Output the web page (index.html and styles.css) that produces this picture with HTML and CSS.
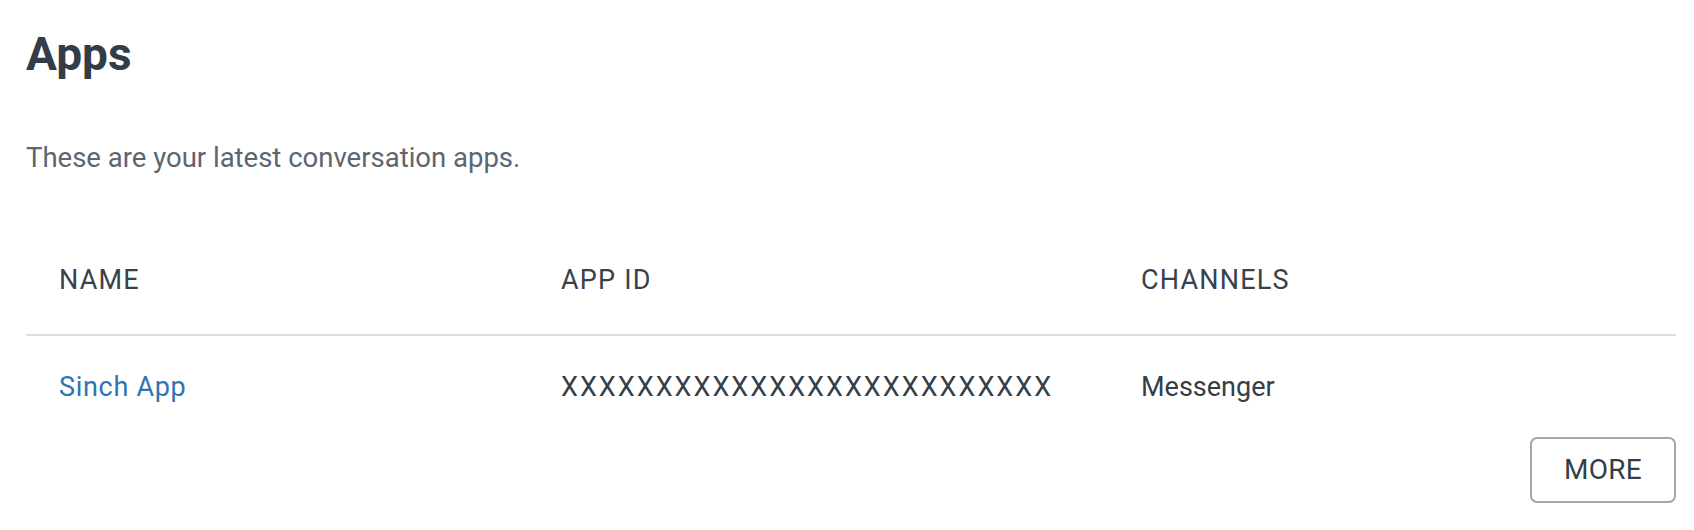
FILE: index.html
```html
<!DOCTYPE html>
<html>
<head>
<meta charset="utf-8">
<link rel="stylesheet" href="styles.css">
</head>
<body>
<main class="page">
  <h1 class="title">Apps</h1>
  <p class="subtitle">These are your latest conversation apps.</p>
  <div class="apps-table">
    <div class="row head">
      <div class="cell">NAME</div>
      <div class="cell">APP ID</div>
      <div class="cell">CHANNELS</div>
    </div>
    <div class="row body">
      <div class="cell"><a class="app-link" href="#">Sinch App</a></div>
      <div class="cell app-id">XXXXXXXXXXXXXXXXXXXXXXXXXX</div>
      <div class="cell">Messenger</div>
    </div>
  </div>
  <div class="actions">
    <button class="more-btn">MORE</button>
  </div>
</main>
</body>
</html>
```

FILE: styles.css
```css
html, body {
  margin: 0;
  padding: 0;
  background: #ffffff;
}

body {
  font-family: Roboto, "Liberation Sans", sans-serif;
  color: #333e48;
}

.page {
  padding: 31px 18px 0 26px;
}

.title {
  margin: 0;
  font-size: 46px;
  line-height: 46px;
  font-weight: 700;
  color: #323d47;
}

.subtitle {
  margin: 67px 0 0 0;
  font-size: 27.5px;
  line-height: 27px;
  color: #5c6670;
}

.apps-table {
  margin-top: 69px;
}

.row {
  display: grid;
  grid-template-columns: 502px 580px 1fr;
}

.cell {
  padding-left: 33px;
  font-size: 27px;
  line-height: 27px;
}

.row.head {
  padding: 27px 0 40px 0;
  border-bottom: 2px solid #dddddd;
  color: #38424b;
}

.row.head .cell {
  letter-spacing: 1.2px;
}

.row.body {
  padding-top: 38px;
  color: #333e48;
}

.app-id {
  letter-spacing: 2px;
}

.app-link {
  color: #2d74b3;
  text-decoration: none;
  letter-spacing: 0.7px;
}

.actions {
  display: flex;
  justify-content: flex-end;
  margin-top: 36px;
}

.more-btn {
  font-family: Roboto, "Liberation Sans", sans-serif;
  font-size: 28px;
  line-height: 28px;
  color: #333e48;
  background: #ffffff;
  border: 2px solid #a3a8ad;
  border-radius: 7px;
  padding: 17px 32px;
  letter-spacing: 0.3px;
}
```
